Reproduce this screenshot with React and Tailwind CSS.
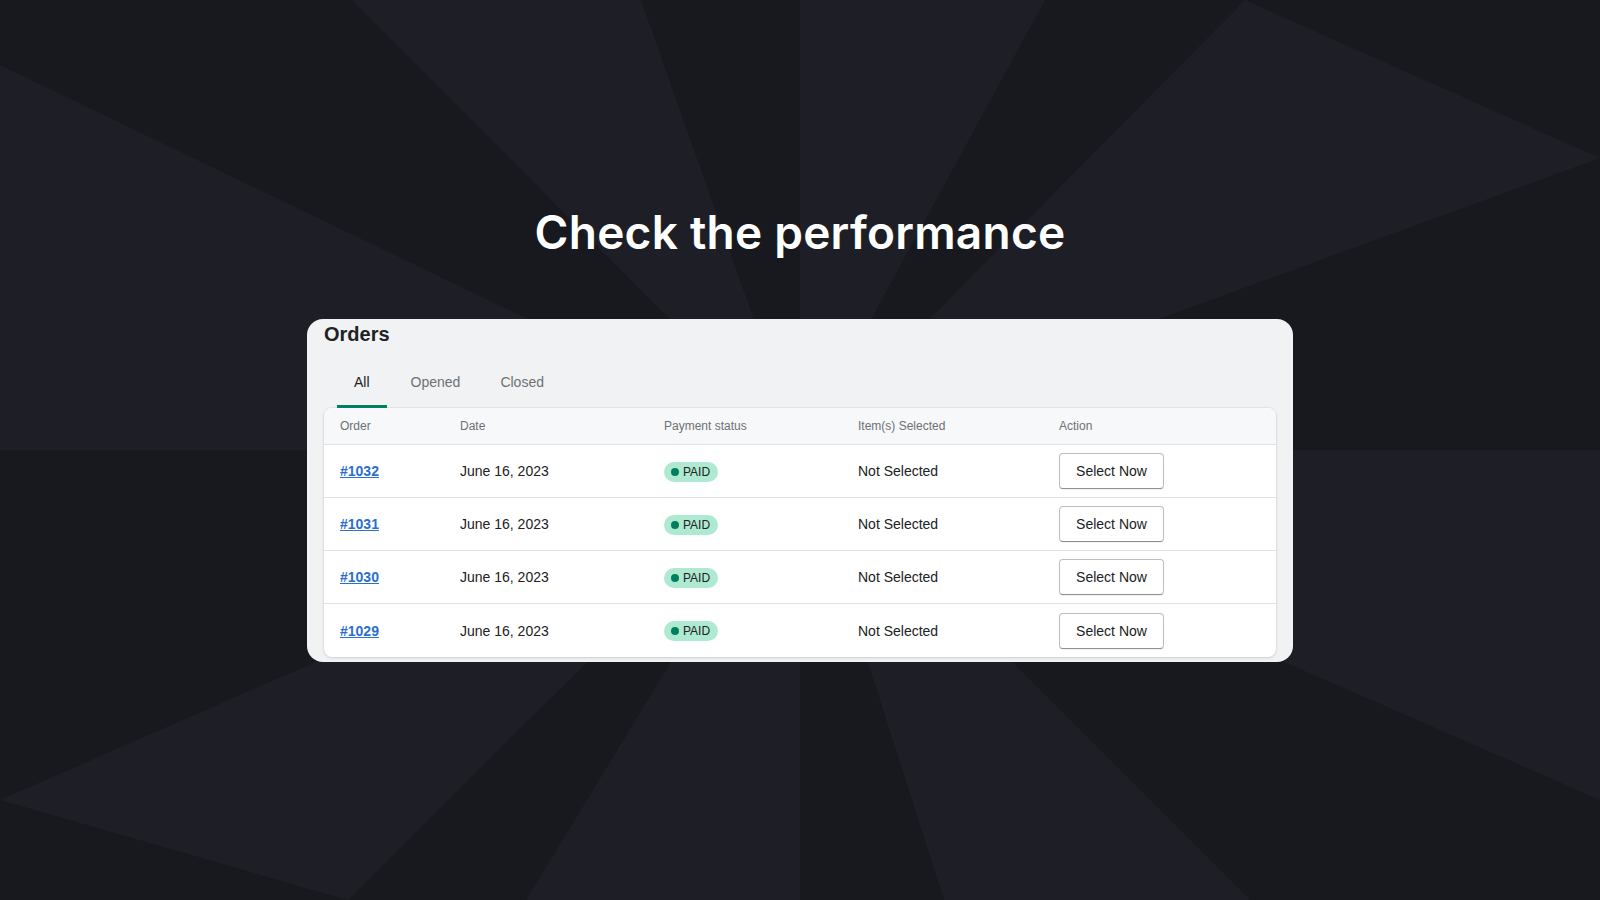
import React from "react";

const rays = [
  "800,450 0,450 0,65",
  "800,450 352,0 641,0",
  "800,450 800,0 1045,0",
  "800,450 1245,0 1600,158",
  "800,450 1600,450 1600,800",
  "800,450 1250,900 944,900",
  "800,450 800,900 526,900",
  "800,450 348,900 0,800",
];

const orders = ["#1032", "#1031", "#1030", "#1029"];

const Rays = () => (
  <svg
    className="absolute inset-0 h-full w-full"
    viewBox="0 0 1600 900"
    preserveAspectRatio="none"
  >
    {rays.map((p) => (
      <polygon key={p} points={p} fill="#1e1f26" />
    ))}
  </svg>
);

const cols = "grid grid-cols-[120px_204px_194px_201px_1fr] items-center px-4";

const App = () => {
  return (
    <div className="relative h-screen w-full overflow-hidden bg-[#18181f] font-['Liberation_Sans',Arial,sans-serif]">
      <Rays />
      <div className="relative flex flex-col items-center pt-[206px]">
        <h1 className="font-['Inter',sans-serif] text-[46px] leading-[52px] font-semibold tracking-[0.25px] text-white">
          Check the performance
        </h1>

        <div className="mt-[61px] w-[986px] rounded-2xl bg-[#f1f2f4] px-[17px] pt-px pb-[5px]">
          <h2 className="text-xl leading-7 font-bold text-[#202223]">Orders</h2>

          <div className="mt-6 ml-[13px] flex gap-2">
            <div className="border-b-[3px] border-[#008060] px-[17px] pb-[13px] text-sm leading-5 text-[#202223]">
              All
            </div>
            <div className="border-b-[3px] border-transparent px-4 pb-[13px] text-sm leading-5 text-[#6d7175]">
              Opened
            </div>
            <div className="border-b-[3px] border-transparent px-4 pb-[13px] text-sm leading-5 text-[#6d7175]">
              Closed
            </div>
          </div>

          <div className="overflow-hidden rounded-lg bg-white shadow-[0_0_0_1px_rgba(63,63,68,0.05),0_1px_3px_0_rgba(63,63,68,0.15)]">
            <div className={`${cols} h-[37px] border-b border-[#e1e3e5] bg-[#f7f8f9] text-xs text-[#6d7175]`}>
              <span>Order</span>
              <span>Date</span>
              <span>Payment status</span>
              <span>Item(s) Selected</span>
              <span>Action</span>
            </div>
            {orders.map((o, i) => (
              <div
                key={o}
                className={`${cols} h-[53px] text-sm text-[#202223] ${
                  i < orders.length - 1 ? "border-b border-[#e1e3e5]" : ""
                }`}
              >
                <a className="font-bold text-[#2c6ecb] underline" href="#">
                  {o}
                </a>
                <span>June 16, 2023</span>
                <span>
                  <span className="inline-flex h-5 items-center gap-[4px] rounded-full bg-[#aee9d1] pr-2 pl-[7px] text-xs text-[#202223]">
                    <span className="h-2 w-2 rounded-full bg-[#007f5f]"></span>
                    PAID
                  </span>
                </span>
                <span>Not Selected</span>
                <span>
                  <button className="h-9 w-[105px] rounded-[4px] border border-[#babfc3] border-b-[#8c9196] bg-white text-sm text-[#202223] shadow-[0_1px_0_rgba(0,0,0,0.05)]">
                    Select Now
                  </button>
                </span>
              </div>
            ))}
          </div>
        </div>
      </div>
    </div>
  );
};

export default App;
